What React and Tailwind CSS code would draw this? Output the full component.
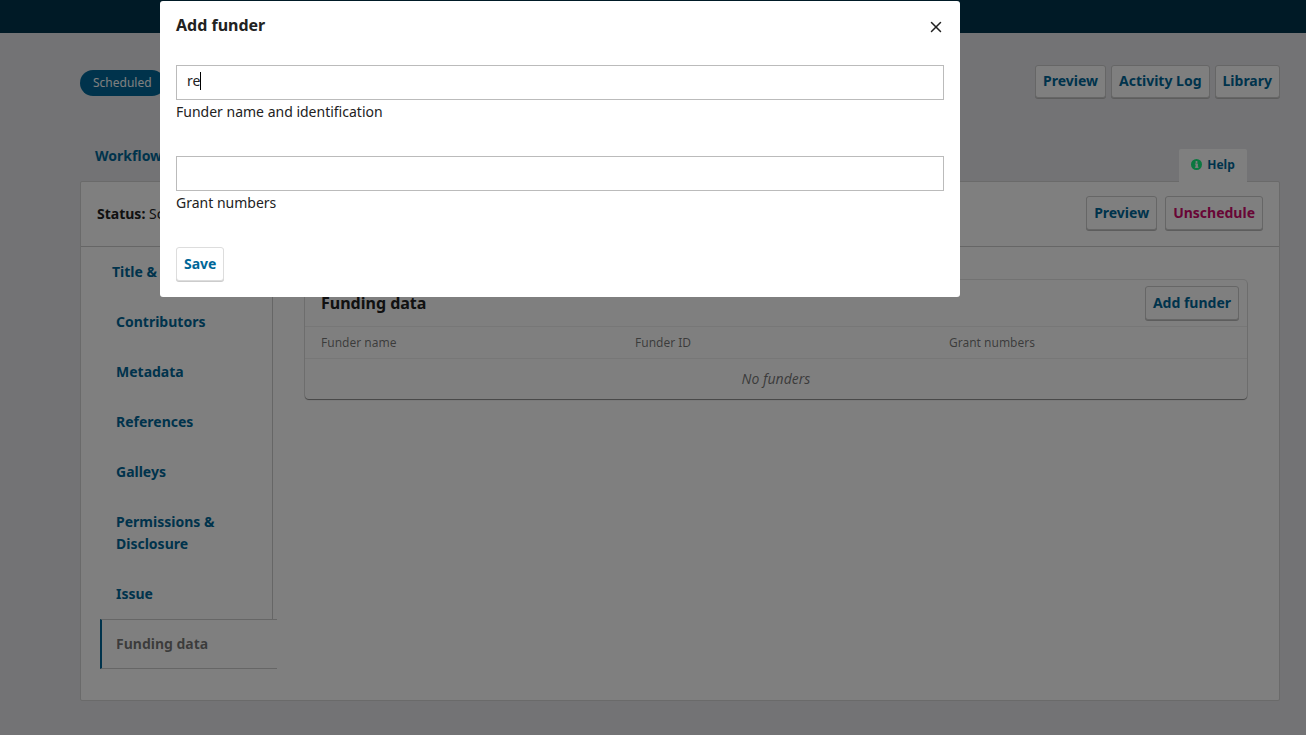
import React from 'react';
import { X } from 'lucide-react';

const sideItems = ['Contributors', 'Metadata', 'References', 'Galleys'];

const Button = ({ children, danger, short }) => (
  <button
    className={`rounded-[3px] border border-[#ccc] bg-white px-[7px] text-sm font-bold shadow-[0_1px_0_#bbb] ${
      short ? 'h-[33px] pb-[2px]' : 'h-[34px]'
    } ${danger ? 'text-[#d00a6c]' : 'text-[#006798]'}`}
  >
    {children}
  </button>
);

const NavItem = ({ children }) => (
  <div className="pl-4 py-[14px] text-sm font-bold leading-[22px] text-[#006798]">{children}</div>
);

export default function App() {
  return (
    <div className="relative h-[735px] overflow-hidden bg-[#e6e7ea] font-['Noto_Sans',sans-serif]">
      <header className="h-[33px] bg-[#00344c]" />

      <main className="ml-[80px] mr-[26px]">
        <div className="mt-[32px] flex h-[33px] items-center justify-between">
          <span className="mt-[3px] flex h-[26px] items-center rounded-full bg-[#006798] px-[13px] text-xs text-white">
            Scheduled
          </span>
          <div className="flex gap-[5px]">
            <Button short>Preview</Button>
            <Button short>Activity Log</Button>
            <Button short>Library</Button>
          </div>
        </div>

        <div className="mt-[51px] flex h-[32px] justify-between">
          <span className="pl-[15px] text-sm font-bold leading-[14px] text-[#006798]">Workflow</span>
          <div className="relative -mb-px mr-[33px] flex w-[68px] items-center justify-center gap-[5px] rounded-t-[2px] bg-white pb-[2px] text-xs font-bold text-[#006798]">
            <svg viewBox="0 0 24 24" className="h-[11px] w-[11px]">
              <circle cx="12" cy="12" r="12" fill="#14f080" />
              <rect x="10" y="10" width="5" height="9" fill="#fff" />
              <rect x="8.5" y="10" width="5" height="2" fill="#fff" />
              <rect x="8.5" y="17" width="8" height="2" fill="#fff" />
              <circle cx="12" cy="6.5" r="2.4" fill="#fff" />
            </svg>
            Help
          </div>
        </div>

        <section className="h-[520px] rounded-[2px] border border-[#d4d4d4] bg-white">
          <div className="flex h-[65px] items-center justify-between border-b border-[#ccc] pb-[2px] pl-4 pr-[16px]">
            <p className="mt-[2px] text-sm text-[#222]">
              <b>Status:</b> Scheduled
            </p>
            <div className="flex gap-2">
              <Button>Preview</Button>
              <Button danger>Unschedule</Button>
            </div>
          </div>

          <div className="flex">
            <nav className="ml-[19px] w-[177px]">
              <div className="w-[173px] border-r border-[#ccc]">
                <div className="pl-3 py-[14px] text-sm font-bold leading-[22px] text-[#006798]">Title &amp; Abstract</div>
                {sideItems.map((item) => (
                  <NavItem key={item}>{item}</NavItem>
                ))}
                <NavItem>
                  Permissions &amp;
                  <br />
                  Disclosure
                </NavItem>
                <NavItem>Issue</NavItem>
              </div>
              <div className="border-y border-l-2 border-y-[#ccc] border-l-[#006798] py-[13px] pl-[14px] text-sm font-bold leading-[22px] text-[rgba(0,0,0,0.54)]">
                Funding data
              </div>
            </nav>

            <div className="ml-[28px] mt-[33px] w-[942px] self-start rounded-[4px] bg-white shadow-[0_1px_1px_rgba(0,0,0,0.4),0_0_0_1px_#e4e4e4]">
              <div className="flex h-[47px] items-center justify-between border-b border-[#eee] pl-4 pr-2">
                <h2 className="text-base font-bold text-[#222]">Funding data</h2>
                <Button>Add funder</Button>
              </div>
              <div className="flex h-[32px] items-center border-b border-[#eee] pl-4 text-xs text-[rgba(0,0,0,0.54)]">
                <span className="w-[314px]">Funder name</span>
                <span className="w-[314px]">Funder ID</span>
                <span>Grant numbers</span>
              </div>
              <div className="flex h-[40px] items-center justify-center text-sm italic text-[rgba(0,0,0,0.54)]">
                No funders
              </div>
            </div>
          </div>
        </section>
      </main>

      {/* modal layer */}
      <div className="absolute inset-0 bg-black/50">
        <div className="ml-[160px] mt-px h-[296px] w-[800px] rounded-[3px] bg-white px-4">
          <div className="flex h-[48px] items-center justify-between">
            <h1 className="text-base font-bold text-[#222]">Add funder</h1>
            <X className="mr-[-1px] mt-[4px] h-[18px] w-[18px] text-[#222]" strokeWidth={2} />
          </div>

          <div className="mt-4 flex h-[35px] items-center border border-[#bbb] pb-[4px] pl-[10px] text-sm text-[#222]">
            re
            <span className="h-[18px] w-px bg-black" />
          </div>
          <p className="mt-[2px] text-sm leading-[20px] text-[#222]">Funder name and identification</p>

          <div className="mt-[34px] h-[35px] border border-[#bbb]" />
          <p className="mt-[2px] text-sm leading-[20px] text-[#222]">Grant numbers</p>

          <button className="mt-[34px] h-[34px] rounded-[3px] border border-[#ddd] bg-white px-[7px] text-sm font-bold text-[#006798] shadow-[0_1px_0_#ccc]">
            Save
          </button>
        </div>
      </div>
    </div>
  );
}
